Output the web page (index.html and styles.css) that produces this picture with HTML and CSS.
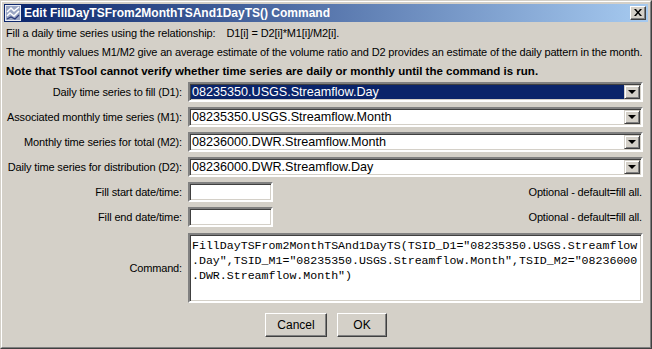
FILE: index.html
```html
<!DOCTYPE html>
<html lang="en">
<head>
    <meta charset="UTF-8">
    <meta name="viewport" content="width=device-width, initial-scale=1.0">
    <title>Edit FillDayTSFrom2MonthTSAnd1DayTS() Command</title>
    <link rel="stylesheet" href="styles.css">
</head>
<body>
    <div class="window">
        <div class="frame">
            <div class="titlebar">
                <svg class="app-icon" width="16" height="16" viewBox="0 0 16 16">
                    <rect x="0.5" y="0.5" width="15" height="15" fill="#9aa6c4" stroke="#e8ecf4"/>
                    <path d="M2 7 L6 3 L9 6 L14 2" stroke="#ffffff" stroke-width="1.5" fill="none"/>
                    <path d="M2 11 L5 8 L9 11 L14 6" stroke="#ffffff" stroke-width="1.5" fill="none"/>
                    <path d="M2 14 L6 12 L10 14 L14 10" stroke="#2a3a7a" stroke-width="1.2" fill="none"/>
                </svg>
                <span class="title">Edit FillDayTSFrom2MonthTSAnd1DayTS() Command</span>
                <div class="close-btn">
                    <svg width="8" height="7" viewBox="0 0 8 7">
                        <path d="M0 0h2l2 2.5 2-2.5h2l-3 3.5 3 3.5h-2l-2-2.5-2 2.5h-2l3-3.5z" fill="#000"/>
                    </svg>
                </div>
            </div>

            <div class="content">
                <p class="info">Fill a daily time series using the relationship:<span class="gap"></span>D1[i] = D2[i]*M1[i]/M2[i].</p>
                <p class="info tight">The monthly values M1/M2 give an average estimate of the volume ratio and D2 provides an estimate of the daily pattern in the month.</p>
                <p class="info bold">Note that TSTool cannot verify whether time series are daily or monthly until the command is run.</p>

                <div class="form">
                    <div class="label">Daily time series to fill (D1):</div>
                    <div class="combo selected">
                        <span class="combo-value">08235350.USGS.Streamflow.Day</span>
                        <span class="combo-btn"><span class="arrow"></span></span>
                    </div>

                    <div class="label">Associated monthly time series (M1):</div>
                    <div class="combo">
                        <span class="combo-value">08235350.USGS.Streamflow.Month</span>
                        <span class="combo-btn"><span class="arrow"></span></span>
                    </div>

                    <div class="label">Monthly time series for total (M2):</div>
                    <div class="combo">
                        <span class="combo-value">08236000.DWR.Streamflow.Month</span>
                        <span class="combo-btn"><span class="arrow"></span></span>
                    </div>

                    <div class="label">Daily time series for distribution (D2):</div>
                    <div class="combo">
                        <span class="combo-value">08236000.DWR.Streamflow.Day</span>
                        <span class="combo-btn"><span class="arrow"></span></span>
                    </div>

                    <div class="label">Fill start date/time:</div>
                    <div class="date-row">
                        <div class="text-field"></div>
                        <span class="optional">Optional - default=fill all.</span>
                    </div>

                    <div class="label">Fill end date/time:</div>
                    <div class="date-row">
                        <div class="text-field"></div>
                        <span class="optional">Optional - default=fill all.</span>
                    </div>

                    <div class="label">Command:</div>
                    <div class="command-area">
                        <span class="cmd-line">FillDayTSFrom2MonthTSAnd1DayTS(TSID_D1="08235350.USGS.Streamflow</span>
                        <span class="cmd-line">.Day",TSID_M1="08235350.USGS.Streamflow.Month",TSID_M2="08236000</span>
                        <span class="cmd-line">.DWR.Streamflow.Month")</span>
                    </div>
                </div>

                <div class="buttons">
                    <div class="btn cancel">Cancel</div>
                    <div class="btn ok">OK</div>
                </div>
            </div>
        </div>
    </div>
</body>
</html>
```

FILE: styles.css
```css
body {
    margin: 0;
    padding: 0;
    background: #d4d0c8;
    font-family: "Liberation Sans", Arial, sans-serif;
    font-size: 11px;
    color: #000;
}

.window {
    width: 652px;
    height: 349px;
    box-sizing: border-box;
    border: 1px solid;
    border-color: #d4d0c8 #404040 #404040 #d4d0c8;
    background: #d4d0c8;
}

.frame {
    height: 100%;
    box-sizing: border-box;
    border: 1px solid;
    border-color: #ffffff #808080 #808080 #ffffff;
    padding: 2px;
    display: flex;
    flex-direction: column;
}

.titlebar {
    height: 18px;
    display: flex;
    align-items: center;
    background: linear-gradient(to right, #0a246a, #a6caf0);
    padding: 0 2px 0 1px;
}

.app-icon {
    flex: none;
    margin-right: 3px;
}

.title {
    flex: 1;
    color: #fff;
    font-weight: bold;
    font-size: 12px;
    white-space: nowrap;
}

.close-btn {
    width: 16px;
    height: 14px;
    box-sizing: border-box;
    background: #d4d0c8;
    border: 1px solid;
    border-color: #ffffff #404040 #404040 #ffffff;
    box-shadow: inset -1px -1px 0 #808080;
    display: flex;
    align-items: center;
    justify-content: center;
    padding-bottom: 1px;
}

.content {
    flex: 1;
    padding: 2px 5px 0 2px;
    display: flex;
    flex-direction: column;
}

.info {
    margin: 0;
    line-height: 19px;
    white-space: nowrap;
    letter-spacing: -0.12px;
}

.gap {
    display: inline-block;
    width: 11px;
}

.info.tight {
    letter-spacing: -0.14px;
}

.info.bold {
    font-weight: bold;
    font-size: 11.5px;
    letter-spacing: 0;
}

.form {
    display: grid;
    grid-template-columns: 176px 1fr;
    column-gap: 6px;
    row-gap: 5px;
    margin-top: 1px;
}

.label {
    display: flex;
    align-items: center;
    justify-content: flex-end;
    white-space: nowrap;
    letter-spacing: -0.15px;
}

.combo,
.text-field,
.command-area {
    box-sizing: border-box;
    border: 2px solid;
    border-color: #808080 #ffffff #ffffff #808080;
    box-shadow: inset 1px 1px 0 #404040, inset -1px -1px 0 #d4d0c8;
    background: #fff;
}

.combo {
    height: 20px;
    display: flex;
    align-items: stretch;
    padding: 1px;
}

.combo-value {
    flex: 1;
    padding-left: 1px;
    display: flex;
    align-items: center;
    font-size: 12.6px;
}

.combo.selected .combo-value {
    background: #0a246a;
    color: #fff;
}

.combo-btn {
    width: 16px;
    box-sizing: border-box;
    background: #d4d0c8;
    border: 1px solid;
    border-color: #d4d0c8 #404040 #404040 #d4d0c8;
    box-shadow: inset 1px 1px 0 #ffffff, inset -1px -1px 0 #808080;
    display: flex;
    align-items: center;
    justify-content: center;
}

.arrow {
    width: 0;
    height: 0;
    border-left: 4px solid transparent;
    border-right: 4px solid transparent;
    border-top: 4px solid #000;
}

.date-row {
    display: flex;
    align-items: center;
    justify-content: space-between;
}

.text-field {
    width: 85px;
    height: 20px;
}

.optional {
    padding-right: 1px;
    letter-spacing: -0.15px;
}

.command-area {
    height: 70px;
    margin-top: 1px;
    padding: 3px 2px 2px;
    font-family: "Liberation Mono", "Courier New", monospace;
    font-size: 11.6px;
    line-height: 15px;
}

.cmd-line {
    display: block;
    white-space: pre;
}

.buttons {
    display: flex;
    justify-content: center;
    gap: 10px;
    margin-top: 10px;
    padding-left: 3px;
}

.btn {
    height: 24px;
    box-sizing: border-box;
    border: 1px solid;
    border-color: #ffffff #404040 #404040 #ffffff;
    box-shadow: inset -1px -1px 0 #808080;
    display: flex;
    align-items: center;
    justify-content: center;
    font-size: 12px;
}

.cancel {
    width: 62px;
}

.ok {
    width: 50px;
}
```
